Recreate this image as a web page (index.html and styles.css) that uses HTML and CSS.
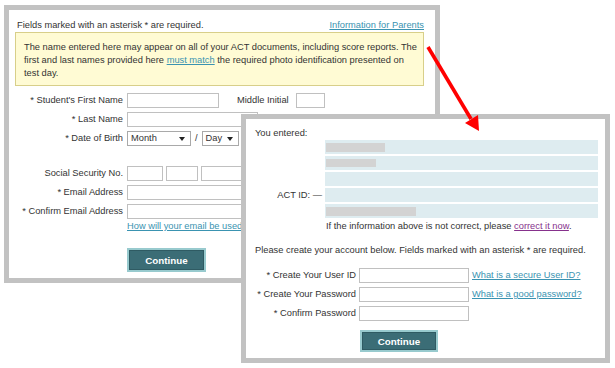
FILE: index.html
```html
<!DOCTYPE html>
<html lang="en">
<head>
<meta charset="UTF-8">
<meta name="viewport" content="width=device-width,initial-scale=1">
<title>ACT account setup</title>
<link rel="stylesheet" href="styles.css">
</head>
<body>

<!-- step 1: student details -->
<div class="panel panel-profile">
  <div class="top">
    <span>Fields marked with an asterisk * are required.</span>
    <a href="#">Information for Parents</a>
  </div>
  <div class="notice">
    The name entered here may appear on all of your ACT documents, including score reports. The<br>
    first and last names provided here <a href="#">must match</a> the required photo identification presented on<br>
    test day.
  </div>

  <div class="form">
    <div class="row">
      <label>* Student's First Name</label>
      <input class="w-first">
      <label class="mid">Middle Initial</label>
      <input class="w-mi">
    </div>
    <div class="row">
      <label>* Last Name</label>
      <input class="w-last">
    </div>
    <div class="row">
      <label>* Date of Birth</label>
      <span class="select w-month">Month</span>
      <span>/</span>
      <span class="select w-day">Day</span>
      <span>/</span>
    </div>
    <div class="row row-ssn">
      <label>Social Security No.</label>
      <input class="w-ssn1">
      <input class="w-ssn2">
      <input class="w-ssn3">
    </div>
    <div class="row">
      <label>* Email Address</label>
      <input class="w-email">
    </div>
    <div class="row">
      <label>* Confirm Email Address</label>
      <input class="w-email">
    </div>
  </div>
  <a class="help" href="#">How will your email be used?</a>
  <button class="btn btn-profile">Continue</button>
</div>

<!-- step 2: account -->
<div class="panel panel-account">
  <div class="line">You entered:</div>
  <div class="entered">
    <div class="cell"><span class="blur b1"></span></div>
    <div class="cell"><span class="blur b2"></span></div>
    <div class="cell"></div>
    <div class="cell"></div>
    <div class="cell"><span class="blur b5"></span></div>
    <div class="act">ACT ID: &mdash;</div>
  </div>
  <div class="note">If the information above is not correct, please <a class="visited" href="#">correct it now</a>.</div>
  <div class="line intro">Please create your account below. Fields marked with an asterisk * are required.</div>

  <div class="form form-account">
    <div class="row">
      <label>* Create Your User ID</label>
      <input class="w-acc">
      <a href="#">What is a secure User ID?</a>
    </div>
    <div class="row">
      <label>* Create Your Password</label>
      <input class="w-acc" type="password">
      <a href="#">What is a good password?</a>
    </div>
    <div class="row">
      <label>* Confirm Password</label>
      <input class="w-acc" type="password">
    </div>
  </div>
  <button class="btn btn-account">Continue</button>
</div>

<svg class="arrow" width="615" height="368" viewBox="0 0 615 368">
  <line x1="428" y1="47" x2="471" y2="119" stroke="#ff0000" stroke-width="3.6"/>
  <polygon points="478,115 465,123 479,131" fill="#ff0000"/>
</svg>

</body>
</html>
```

FILE: styles.css
```css
*{box-sizing:border-box;margin:0;padding:0}
body{
  width:615px;height:368px;
  position:relative;overflow:hidden;
  background:#fff;
  font:9.3px/13px "Liberation Sans",Arial,sans-serif;
  color:#333;
}
a{color:#3a93b1;text-decoration:underline}
a.visited{color:#86318c}

/* ---------- panels ---------- */
.panel{
  position:absolute;
  background:#fff;
  border:5px solid #c2c2c2;
}
.panel-profile{left:4px;top:5px;width:436px;height:278px;padding:9px 11px 0 6px}
.panel-account{left:241px;top:114px;width:369px;height:249px;padding:8px 7px 0 0}

/* ---------- step 1 ---------- */
.top{display:flex;justify-content:space-between;padding-left:2px}
.notice{
  height:54px;
  background:#fffbd4;
  border:1px solid #d8cf8a;
  padding:8px 2px 5px 8px;
  white-space:nowrap;
}

.form{display:flex;flex-direction:column;gap:4px;margin-top:7px}
.row{display:flex;align-items:center;gap:4px;height:15px;white-space:nowrap}
.row > label:first-child{width:108px;flex:none;text-align:right}
input{height:15px;border:1px solid #c0c0c0;background:#fff;flex:none;outline:none}

.w-first{width:92px}
.row .mid{margin-left:14px}
.w-mi{width:29px;margin-left:3px}
.w-last{width:131px}
.w-email{width:160px}
.row-ssn{margin-top:16px;gap:3px}
.row-ssn label{margin-right:1px}
.w-ssn1{width:36px}
.w-ssn2{width:32px}
.w-ssn3{width:41px}

.select{
  display:flex;align-items:center;
  height:15px;flex:none;
  border:1px solid #a9a9a9;
  padding-left:3px;
}
.select::after{
  content:"";
  margin-left:auto;margin-right:5px;
  border-left:3px solid transparent;
  border-right:3px solid transparent;
  border-top:4px solid #222;
}
.w-month{width:64px}
.w-day{width:37px}

.help{display:block;margin:1px 0 0 112px;line-height:12px;white-space:nowrap}

.btn{
  display:flex;align-items:center;justify-content:center;
  background:#3b6d76;
  color:#fff;
  font:bold 9.8px "Liberation Sans",Arial,sans-serif;
  border:2px solid #98cace;
  box-shadow:inset 0 0 0 1px #2f5b63;
}
.btn-profile{width:79px;height:24px;margin:16px 0 0 112px}

/* ---------- step 2 ---------- */
.line{padding-left:9px;white-space:nowrap}
.entered{
  display:grid;
  grid-template-columns:79px 1fr;
  grid-template-rows:repeat(5,14px);
  row-gap:2px;
}
.entered .cell{grid-column:2;background:#deecf0}
.entered .act{grid-column:1;grid-row:4;text-align:right;padding-right:3px;line-height:14px}
.blur{display:block;height:9px;margin:3px 0 0 1px;background:#d3d3d3;filter:blur(.4px)}
.b1{width:59px}
.b2{width:50px;height:8px}
.b5{width:90px}

.note{padding-left:80px;margin-top:2px;white-space:nowrap}
.intro{margin-top:11px}

.form-account{margin-top:11px}
.form-account .row{gap:3px}
.form-account .row > label:first-child{width:110px}
.w-acc{width:110px}
.btn-account{width:78px;height:22px;margin:9px 0 0 114px}

/* ---------- arrow overlay ---------- */
.arrow{position:absolute;left:0;top:0;pointer-events:none}
```
